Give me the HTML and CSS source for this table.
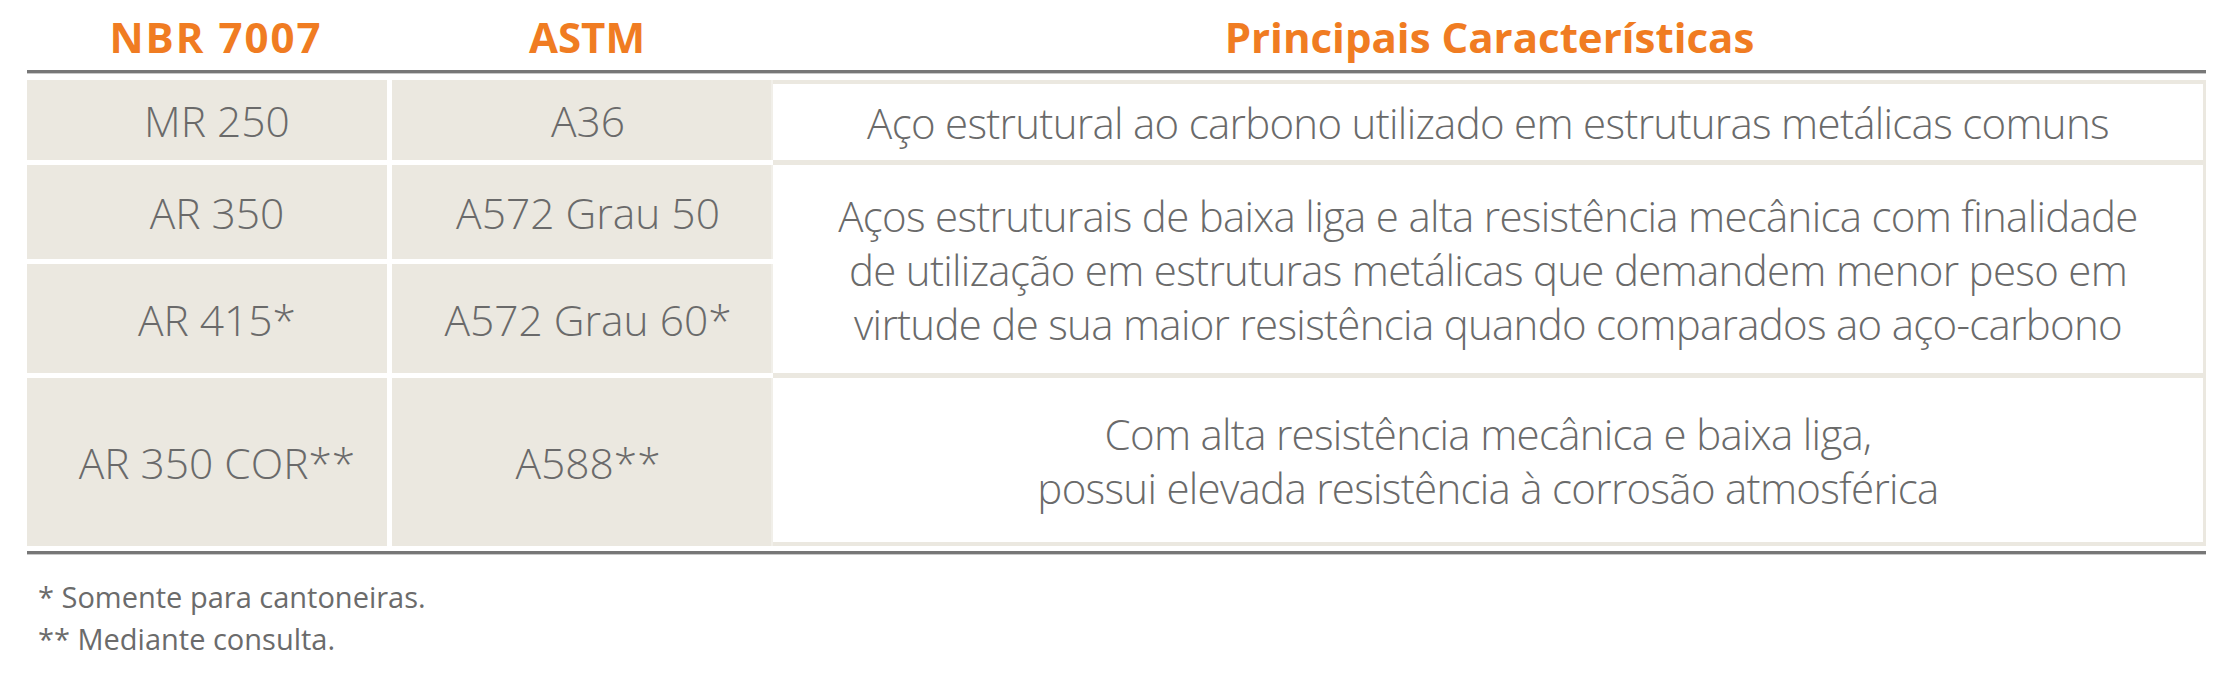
FILE: index.html
```html
<!DOCTYPE html>
<html lang="pt-BR">
<head>
<meta charset="utf-8">
<title>Aços estruturais</title>
<link rel="stylesheet" href="styles.css">
</head>
<body>
<div class="wrap">
  <div class="head">
    <div class="h h1">NBR 7007</div>
    <div class="h h2">ASTM</div>
    <div class="h h3">Principais Características</div>
  </div>
  <div class="rule"></div>
  <div class="grid">
    <div class="cell nbr r1">MR 250</div>
    <div class="cell astm r1">A36</div>
    <div class="cell desc r1 first">Aço estrutural ao carbono utilizado em estruturas metálicas comuns</div>
    <div class="cell nbr r2">AR 350</div>
    <div class="cell astm r2">A572 Grau 50</div>
    <div class="cell desc r23">Aços estruturais de baixa liga e alta resistência mecânica com finalidade<br>de utilização em estruturas metálicas que demandem menor peso em<br>virtude de sua maior resistência quando comparados ao aço-carbono</div>
    <div class="cell nbr r3">AR 415*</div>
    <div class="cell astm r3">A572 Grau 60*</div>
    <div class="cell nbr r4">AR 350 COR**</div>
    <div class="cell astm r4">A588**</div>
    <div class="cell desc r4 last">Com alta resistência mecânica e baixa liga,<br>possui elevada resistência à corrosão atmosférica</div>
  </div>
  <div class="rule"></div>
  <div class="notes">
    <p>* Somente para cantoneiras.</p>
    <p>** Mediante consulta.</p>
  </div>
</div>
</body>
</html>
```
FILE: styles.css
```css
html, body {
  margin: 0;
  padding: 0;
  background: #ffffff;
}

.wrap {
  margin-left: 27px;
  width: 2179px;
  font-family: "Open Sans", "Roboto", "Liberation Sans", sans-serif;
}

.head {
  display: grid;
  grid-template-columns: 365px 381px 1433px;
  height: 70px;
  box-sizing: border-box;
  padding-top: 16px;
}

.h {
  font-size: 42px;
  line-height: 42px;
  font-weight: 700;
  color: #f07c22;
  text-align: center;
  white-space: nowrap;
}

.h1 {
  padding-left: 13px;
  letter-spacing: 2px;
}

.h2 { padding-left: 9px; }

.rule {
  height: 3px;
  background: #777777;
  box-shadow: 0 1px 0 #c9c9c9;
}

.grid {
  margin-top: 7px;
  display: grid;
  grid-template-columns: 365px 381px 1433px;
  grid-template-rows: 80px 94px 109px 168px;
  row-gap: 5px;
  background: linear-gradient(to right, #ffffff 746px, #ebe8e0 746px);
  margin-bottom: 5px;
}

.cell {
  display: flex;
  align-items: center;
  justify-content: center;
  text-align: center;
  font-size: 42.5px;
  font-weight: 300;
  color: #6a6a6a;
  line-height: 54px;
  box-sizing: border-box;
  padding-top: 2px;
  white-space: nowrap;
}

.nbr {
  grid-column: 1;
  background: #ebe8e0;
  margin-right: 5px;
  padding-left: 20px;
}

.astm {
  grid-column: 2;
  background: #ebe8e0;
  border-right: 2px solid #f1efe9;
  padding-left: 13px;
}

.desc {
  grid-column: 3;
  background: #ffffff;
  border-right: 3px solid #ebe8e0;
  font-size: 42px;
  letter-spacing: -0.7px;
}

.r1 { grid-row: 1; }
.r2 { grid-row: 2; }
.r3 { grid-row: 3; }
.r4 { grid-row: 4; }
.r23 { grid-row: 2 / span 2; }

.first { border-top: 4px solid #ebe8e0; }
.last { border-bottom: 4px solid #ebe8e0; }

.notes {
  margin-top: 22px;
  padding-left: 11px;
  font-size: 29px;
  line-height: 42px;
  font-weight: 400;
  color: #6b6b6b;
}

.notes p {
  margin: 0;
}
```
